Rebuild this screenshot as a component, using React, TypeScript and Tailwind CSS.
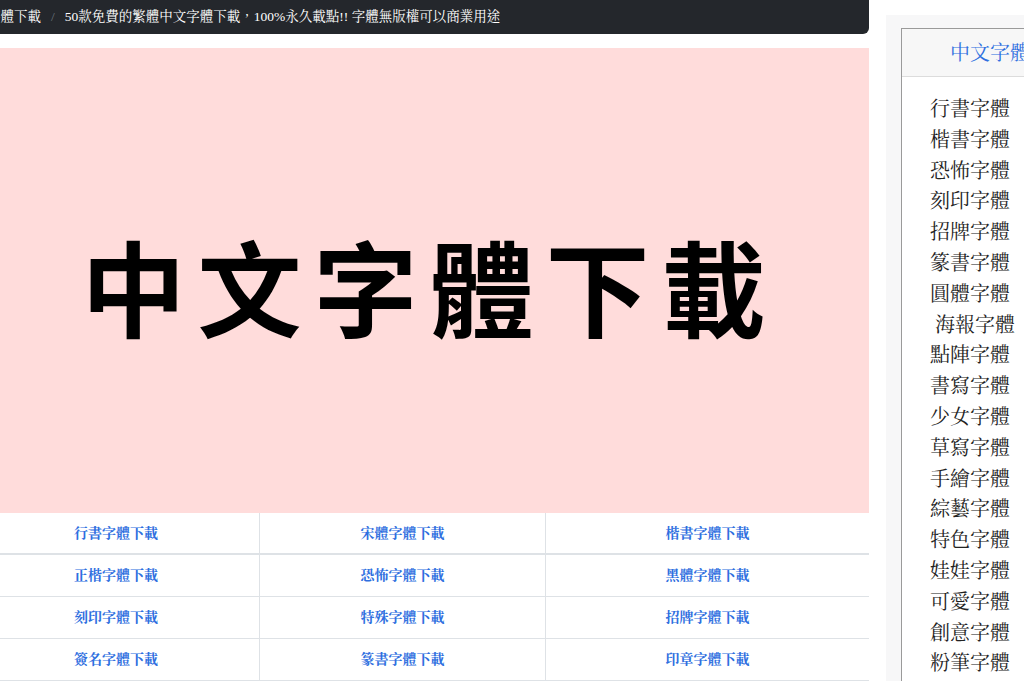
export default function App() {
  const rows = [
    ["行書字體下載", "宋體字體下載", "楷書字體下載"],
    ["正楷字體下載", "恐怖字體下載", "黑體字體下載"],
    ["刻印字體下載", "特殊字體下載", "招牌字體下載"],
    ["簽名字體下載", "篆書字體下載", "印章字體下載"],
  ];
  const side = ["行書字體","楷書字體","恐怖字體","刻印字體","招牌字體","篆書字體","圓體字體","海報字體","點陣字體","書寫字體","少女字體","草寫字體","手繪字體","綜藝字體","特色字體","娃娃字體","可愛字體","創意字體","粉筆字體"];
  const serif = { fontFamily: '"Liberation Serif","Noto Serif CJK TC","Noto Sans CJK TC",serif' };
  return (
    <div className="w-[1024px] h-[681px] overflow-hidden bg-white flex" style={serif}>
      <div className="w-[869px] shrink-0 flex flex-col">
        <div className="h-[34px] bg-[#24272c] rounded-br-[6px] flex items-center text-white text-[13.5px] whitespace-nowrap">
          <span className="ml-[-40px]">中文字體下載</span>
          <span className="mx-[10px] text-[#6c757d]">/</span>
          <span>50款免費的繁體中文字體下載，100%永久載點!! 字體無版權可以商業用途</span>
        </div>
        <div className="mt-[14px] h-[470px] bg-[#ffdcdb] flex items-center justify-center">
          <div className="text-[104px] leading-none font-bold text-black tracking-[12px] ml-[-10px] mt-[10px] whitespace-nowrap" style={{ fontFamily: '"Noto Sans CJK TC",sans-serif' }}>中文字體下載</div>
        </div>
        <div className="ml-[-27px] flex flex-col">
          {rows.map((r, i) => (
            <div key={i} className={`grid grid-cols-[286px_286px_1fr] h-[42px] ${i === 0 ? "border-b-2 border-[#dee2e6]" : "border-b border-[#dee2e6]"}`}>
              {r.map((c, j) => (
                <div key={j} className={`flex items-center justify-center text-[14px] font-bold text-[#2f6fe0] ${j > 0 ? "border-l border-[#dee2e6]" : ""}`}>{c}</div>
              ))}
            </div>
          ))}
        </div>
      </div>
      <div className="ml-[17px] mt-[15px] flex-1 bg-[#f7f7f8] pl-[15px] pt-[13px]">
        <div className="border border-[#9a9a9a] border-r-0 bg-white h-[700px]">
          <div className="h-[48px] bg-[#f7f7f7] border-b border-[#dcdcdc] flex items-center pl-[48px] text-[20px] text-[#2f6fe0] whitespace-nowrap">中文字體</div>
          <div className="pt-[17px] pl-[28px] flex flex-col text-[20px] text-[#222] leading-[30.8px] whitespace-nowrap">
            {side.map((s) => (
              <div key={s} className={s === "海報字體" ? "pl-[5px]" : ""}>{s}</div>
            ))}
          </div>
        </div>
      </div>
    </div>
  );
}
